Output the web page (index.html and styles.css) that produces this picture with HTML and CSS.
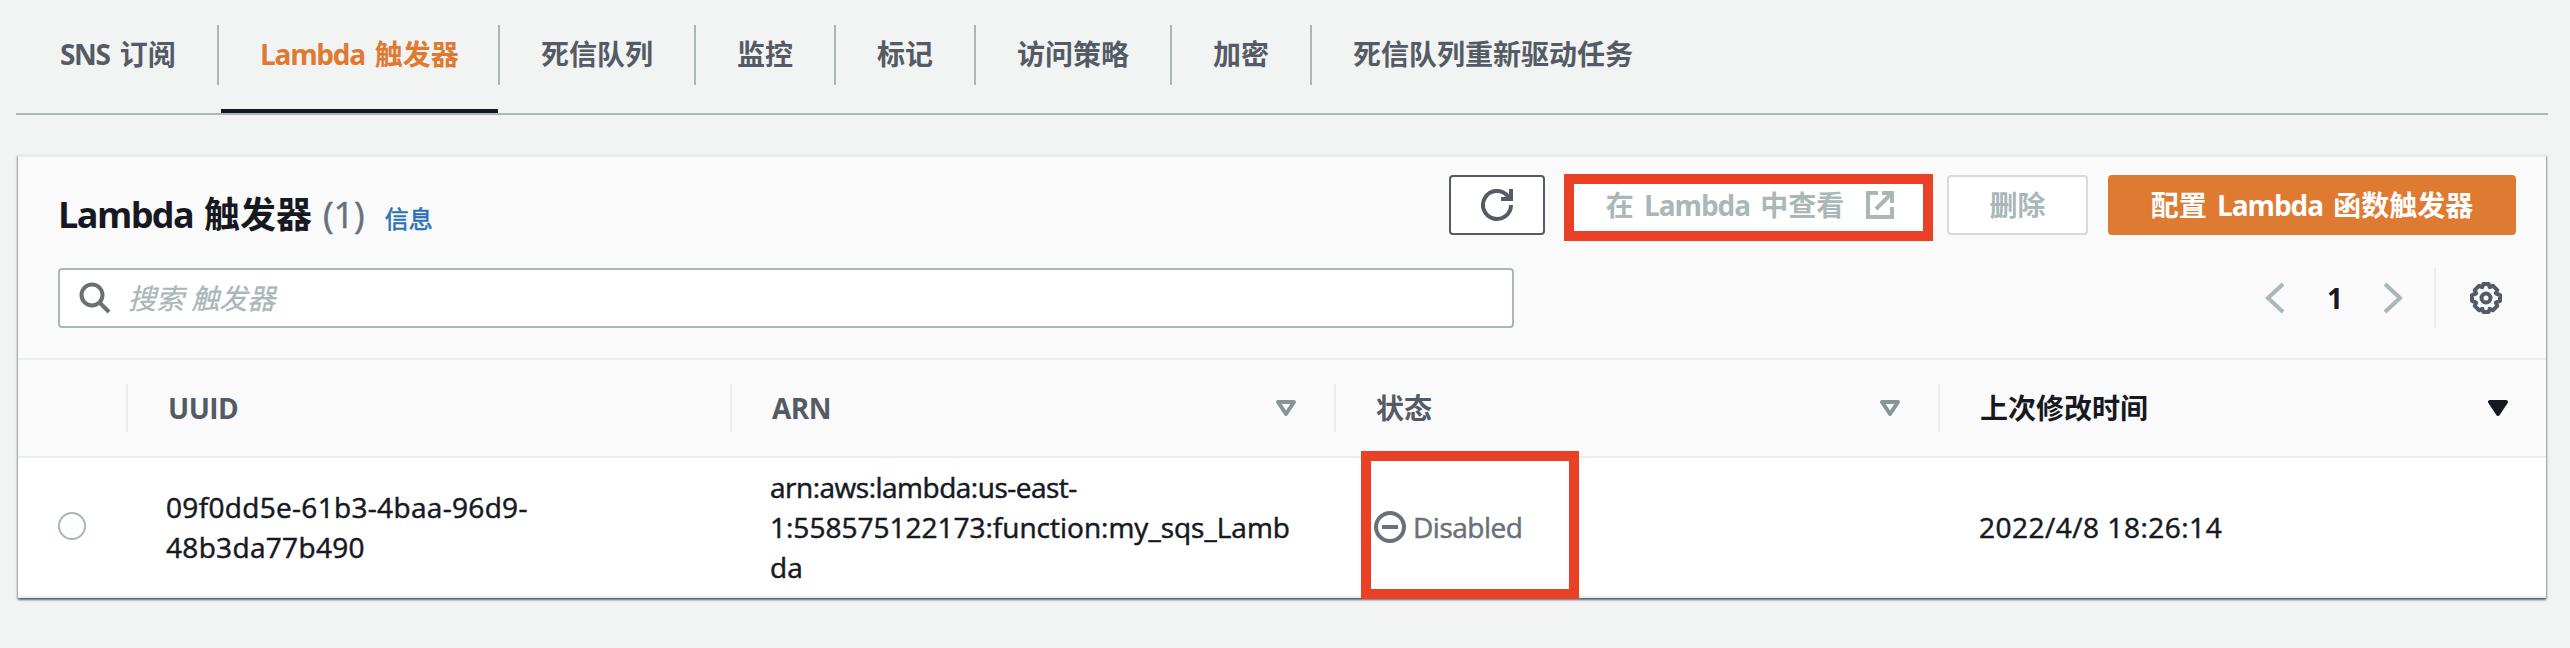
FILE: index.html
```html
<!DOCTYPE html>
<html lang="zh-CN">
<head>
<meta charset="utf-8">
<title>Lambda 触发器</title>
<link rel="stylesheet" href="styles.css">
</head>
<body>
<nav class="tabs">
  <a class="tab tab-sns"><span class="latin">SNS </span>订阅</a>
  <a class="tab tab-lambda active"><span class="latin">Lambda </span>触发器</a>
  <a class="tab">死信队列</a>
  <a class="tab">监控</a>
  <a class="tab">标记</a>
  <a class="tab">访问策略</a>
  <a class="tab">加密</a>
  <a class="tab">死信队列重新驱动任务</a>
</nav>
<main class="card">
  <header class="card-head">
    <div class="title-row">
      <h2 class="title"><span class="latin">Lambda </span>触发器</h2>
      <span class="count">(1)</span>
      <a class="info">信息</a>
      <div class="actions">
        <button class="btn btn-refresh" aria-label="refresh">
          <svg width="32" height="32" viewBox="0 0 32 32" fill="none" stroke="currentColor" stroke-width="4"><path d="M30 16A14 14 0 1 1 26 6.2L29 10"/><path d="M30 0v10H20"/></svg>
        </button>
        <button class="btn btn-view disabled"><span>在<span class="latin"> Lambda </span>中查看</span>
          <svg width="28" height="28" viewBox="0 0 28 28" fill="none" stroke="currentColor" stroke-width="4"><path d="M12 2H2v24h24V16"/><path d="M16 2h10v10M26 2L10 18"/></svg>
          <i class="mark mark-button"></i>
        </button>
        <button class="btn btn-delete disabled">删除</button>
        <button class="btn btn-primary"><span>配置<span class="latin"> Lambda </span>函数触发器</span></button>
      </div>
    </div>
    <div class="filter-row">
      <div class="search">
        <svg width="32" height="32" viewBox="0 0 32 32" fill="none" stroke="currentColor" stroke-width="4"><circle cx="13" cy="13" r="10.5"/><path d="M20.5 20.5L30 30"/></svg>
        <span class="placeholder">搜索 触发器</span>
      </div>
      <div class="pager">
        <svg width="20" height="32" viewBox="0 0 20 32" fill="none" stroke="currentColor" stroke-width="4"><path d="M18 2L3 16L18 30"/></svg>
        <b class="page">1</b>
        <svg width="20" height="32" viewBox="0 0 20 32" fill="none" stroke="currentColor" stroke-width="4"><path d="M2 2L17 16L2 30"/></svg>
      </div>
      <div class="settings">
        <svg width="32" height="32" viewBox="0 0 32 32" fill="none" stroke="currentColor" stroke-width="4" stroke-linejoin="round"><path d="M13.3 2h5.4l1 3.2 3.1-1.5 4.5 4.5-1.5 3.1 4.2 1.8v5.8l-4.2 1.8 1.5 3.1-4.5 4.5-3.1-1.5-1 3.2h-5.4l-1-3.2-3.1 1.5-4.5-4.5 1.5-3.1L2 18.900v-5.800l4.200-1.800-1.500-3.100 4.500-4.500 3.100 1.500z"/><circle cx="16" cy="16" r="4.500"/></svg>
      </div>
    </div>
  </header>
  <section class="table">
    <div class="row head">
      <div class="cell"></div>
      <div class="cell th-latin">UUID</div>
      <div class="cell th-latin">ARN<svg class="sort" width="20" height="16" viewBox="0 0 20 16"><path d="M2 2h16L10 14z" fill="none" stroke="currentColor" stroke-width="4" stroke-linejoin="round"/></svg></div>
      <div class="cell">状态<svg class="sort" width="20" height="16" viewBox="0 0 20 16"><path d="M2 2h16L10 14z" fill="none" stroke="currentColor" stroke-width="4" stroke-linejoin="round"/></svg></div>
      <div class="cell sorted">上次修改时间<svg class="sort" width="20" height="16" viewBox="0 0 20 16"><path d="M2 2h16L10 14z" fill="currentColor" stroke="currentColor" stroke-width="4" stroke-linejoin="round"/></svg></div>
    </div>
    <div class="row body">
      <div class="cell"><span class="radio"></span></div>
      <div class="cell"><span class="uuid">09f0dd5e-61b3-4baa-96d9-<br>48b3da77b490</span></div>
      <div class="cell"><span class="arn"><span class="arn-prefix">arn:aws:lambda:us-east-</span><br>1:558575122173:function:my_sqs_Lamb<br>da</span></div>
      <div class="cell status">
        <svg width="32" height="32" viewBox="0 0 32 32" fill="none" stroke="currentColor" stroke-width="4"><circle cx="16" cy="16" r="14"/><path d="M8 16h16"/></svg>
        <span class="status-text">Disabled</span>
        <i class="mark mark-status"></i>
      </div>
      <div class="cell"><span class="date">2022/4/8 18:26:14</span></div>
    </div>
  </section>
</main>
</body>
</html>
```
FILE: styles.css
```css
* { box-sizing: border-box; }
body {
  margin: 0;
  height: 648px;
  overflow: hidden;
  padding: 0 24px 0 16px;
  background: #f2f3f3;
  color: #16191f;
  font: 28px/40px "Open Sans", "Noto Sans CJK SC", sans-serif;
}
svg { display: block; flex: none; overflow: visible; }
.latin { white-space: pre; letter-spacing: -1.3px; word-spacing: 4px; }

.tabs {
  display: flex;
  height: 115px;
  margin-right: -2px;
  padding-top: 25px;
  border-bottom: 2px solid #aab7b8;
  color: #545b64;
  font-weight: 700;
}
.tab {
  position: relative;
  height: 60px;
  padding: 9px 41px 0;
  border-right: 2px solid #aab7b8;
  white-space: nowrap;
}
.tab:last-child { border-right: 0; }
.tab-sns { width: 203px; padding-left: 44px; }
.tab-lambda { width: 281px; }
.active { color: #e07932; }
.active::after {
  content: "";
  position: absolute;
  left: 2px;
  right: 0;
  top: 84px;
  height: 4px;
  background: #16191f;
}

.card {
  width: 2528px;
  margin: 40px 0 0 2px;
  border-top: 2px solid #eaeded;
  background: #fff;
  box-shadow: 0 2px 2px 0 rgba(0, 28, 36, .5), 1px 1px 2px 0 rgba(0, 28, 36, .25), -1px 1px 2px 0 rgba(0, 28, 36, .25);
}
.card-head {
  height: 203px;
  padding: 18px 30px 0 40px;
  border-bottom: 2px solid #eaeded;
  background: #fafafa;
}
.title-row { display: flex; height: 60px; }
.title {
  margin: 15px 0 0;
  font-size: 36px;
  line-height: 50px;
  white-space: nowrap;
}
.title .latin { letter-spacing: -1.6px; word-spacing: 3px; }
.count { margin: 15px 0 0 11px; font-size: 36px; line-height: 50px; color: #687078; -webkit-text-stroke: .5px currentColor; }
.info { margin: 24px 0 0 20px; font-size: 24px; line-height: 40px; color: #2a72b8; -webkit-text-stroke: .6px currentColor; }
.actions { display: flex; gap: 20px; margin-left: auto; }
.btn {
  position: relative;
  display: flex;
  align-items: center;
  justify-content: center;
  height: 60px;
  padding: 0;
  border: 2px solid #545b64;
  border-radius: 4px;
  background: #fff;
  color: #545b64;
  font: inherit;
  font-weight: 700;
  white-space: nowrap;
}
.btn .latin { letter-spacing: -1.1px; }
.btn-refresh { width: 96px; }
.btn-view { width: 362px; gap: 22px; padding-left: 8px; }
.btn-delete { width: 141px; }
.btn-primary { width: 408px; border-color: #de7a32; background: #de7a32; color: #fff; }
.disabled { border-color: #d5dbdb; color: #aab7b8; }
.mark { position: absolute; border: 10px solid #ea4126; }
.mark-button { left: -3px; top: -3px; width: 369px; height: 67px; }

.filter-row { display: flex; align-items: center; margin-top: 33px; }
.search {
  display: flex;
  align-items: center;
  gap: 17px;
  width: 1456px;
  height: 60px;
  padding-left: 19px;
  border: 2px solid #aab7b8;
  border-radius: 4px;
  background: #fff;
  color: #687078;
}
.placeholder { color: #aab7b8; font-style: italic; -webkit-text-stroke: .3px currentColor; }
.pager { display: flex; align-items: center; gap: 42px; margin-left: auto; color: #aab7b8; }
.page { width: 14px; color: #16191f; }
.settings {
  display: flex;
  align-items: center;
  height: 60px;
  margin-left: 31px;
  padding: 0 14px 0 34px;
  border-left: 2px solid #eaeded;
  color: #545b64;
}

.row { display: grid; grid-template-columns: 110px 604px 604px 604px 606px; border-bottom: 2px solid #eaeded; }
.row .cell { display: flex; align-items: center; padding-left: 38px; }
.row .cell:last-child { padding-left: 39px; }
.head { height: 98px; padding: 24px 0; background: #fafafa; color: #545b64; font-weight: 700; }
.head .cell, .head .cell:last-child { height: 48px; padding-left: 40px; padding-right: 38px; border-right: 2px solid #eaeded; }
.head .cell:last-child { border-right: 0; }
.th-latin { letter-spacing: -.5px; }
.sort { margin-left: auto; color: #879596; }
.sorted, .sorted .sort { color: #16191f; }
.body { height: 140px; -webkit-text-stroke: .5px currentColor; }
.radio { width: 28px; height: 28px; margin: 0 0 2px 2px; border: 2px solid #aab7b8; border-radius: 50%; }
.uuid { letter-spacing: .32px; }
.arn { letter-spacing: 0; }
.arn-prefix { letter-spacing: -.5px; }
.date { letter-spacing: .5px; }
.row .status { position: relative; gap: 7px; color: #687078; }
.status-text { letter-spacing: -.5px; }
.mark-status { left: 25px; top: -7px; width: 218px; height: 148px; }
```
